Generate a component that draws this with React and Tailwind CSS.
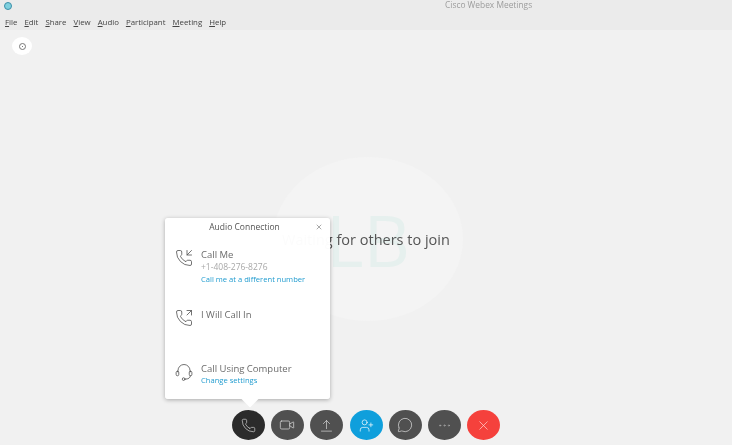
import React from 'react';
import { Phone, PhoneIncoming, PhoneOutgoing, Video, UserPlus, MessageCircle, Ellipsis, X } from 'lucide-react';

const menus = ['File', 'Edit', 'Share', 'View', 'Audio', 'Participant', 'Meeting', 'Help'];

const HeadsetIcon = ({ size, strokeWidth, className }) => (
  <svg width={size} height={size} viewBox="0 0 24 24" fill="none" stroke="currentColor" strokeWidth={strokeWidth} strokeLinecap="round" className={className}>
    <path d="M4 12 V10 a8 8 0 0 1 16 0 V12" />
    <rect x="1.5" y="11" width="3.5" height="6" rx="1.7" />
    <rect x="19" y="11" width="3.5" height="6" rx="1.7" />
    <path d="M20.5 17 c0 3 -2.5 4.5 -7 4.5" />
    <circle cx="11.5" cy="21.5" r="1.8" />
  </svg>
);

const UploadIcon = ({ size, strokeWidth, className }) => (
  <svg width={size} height={size} viewBox="0 0 24 24" fill="none" stroke="currentColor" strokeWidth={strokeWidth} strokeLinecap="round" strokeLinejoin="round" className={className}>
    <path d="M12 17 V4" />
    <path d="M7 9 L12 4 L17 9" />
    <path d="M4 21 H20" />
  </svg>
);

const AudioRow = ({ icon: Icon, title, className, children }) => (
  <div className={`flex items-start gap-[8px] pl-[10px] ${className}`}>
    <Icon size={18} strokeWidth={1.1} className="mt-[1px] text-[#555555] shrink-0" />
    <div className="flex flex-col">
      <span className="text-[9.5px] leading-[14px] text-[#6b6b6b]">{title}</span>
      {children}
    </div>
  </div>
);

const RoundButton = ({ icon: Icon, bg, color = 'text-[#d8d8d8]', size = 15 }) => (
  <button className={`w-[33px] h-[30px] rounded-[50%] flex items-center justify-center ${bg}`}>
    <Icon size={size} strokeWidth={1.1} className={color} />
  </button>
);

export default function App() {
  return (
    <div className="w-[732px] h-[447px] flex flex-col overflow-hidden bg-[#f1f1f1] blur-[0.4px]" style={{ fontFamily: '"Open Sans", "Noto Sans", sans-serif' }}>
      {/* Title + menu bar */}
      <header className="h-[30px] bg-[#ebebeb] flex flex-col shrink-0">
        <div className="h-[11px] flex items-center pl-[4px]">
          <div className="w-[8px] h-[8px] rounded-full bg-[#7fd0de] border border-[#3d8fa8]" />
          <span className="ml-[433px] text-[8.4px] text-[#9c9c9c]">Cisco Webex Meetings</span>
        </div>
        <nav className="mt-[5px] flex gap-[7px] pl-[5px] text-[7.85px] leading-[12px] text-[#444444]">
          {menus.map((m) => (
            <span key={m}><u>{m[0]}</u>{m.slice(1)}</span>
          ))}
        </nav>
      </header>

      {/* Meeting stage */}
      <main className="flex-1 flex flex-col relative">
        <div className="pt-[7px] pl-[12px]">
          <div className="w-[20px] h-[18px] rounded-[50%] bg-white flex items-center justify-center">
            <div className="w-[7px] h-[7px] rounded-full border border-[#777777] flex items-center justify-center">
              <div className="w-[1px] h-[1px] bg-[#777777]" />
            </div>
          </div>
        </div>

        <div className="flex-1 flex justify-center">
          <div className="ml-[4px] mt-[102px] w-[190px] h-[164px] rounded-[50%] bg-[#f4f4f4] flex items-center justify-center">
            <span className="text-[72px] leading-none text-[#e6f0ee]">LB</span>
          </div>
        </div>

        <p className="absolute left-[282px] top-[201px] text-[14.5px] leading-[18px] text-[#555555]">Waiting for others to join</p>

        {/* Toolbar */}
        <div className="h-[35px] flex justify-center items-start gap-[6.3px]">
          <RoundButton icon={Phone} bg="bg-[#2b2b2b]" />
          <RoundButton icon={Video} bg="bg-[#505050]" size={16} />
          <RoundButton icon={UploadIcon} bg="bg-[#505050]" />
          <RoundButton icon={UserPlus} bg="bg-[#0f9fdc]" color="text-white" />
          <RoundButton icon={MessageCircle} bg="bg-[#505050]" size={16} />
          <RoundButton icon={Ellipsis} bg="bg-[#505050]" color="text-[#a8a8a8]" />
          <RoundButton icon={X} bg="bg-[#f5413c]" color="text-[#ffd9d6]" />
        </div>
        <div className="h-[2px] bg-white" />

        {/* Audio connection popover */}
        <div className="absolute left-[165px] top-[188px] w-[165px] h-[181px] bg-white/98 rounded-[3px] shadow-[0_1px_4px_rgba(0,0,0,0.3)] flex flex-col">
          <div className="h-[18px] flex items-center justify-center pr-[6px] relative">
            <span className="text-[8.5px] text-[#555555]">Audio Connection</span>
            <X size={8} strokeWidth={1.5} className="absolute right-[7px] top-[5px] text-[#555555]" />
          </div>
          <AudioRow icon={PhoneIncoming} title="Call Me" className="mt-[12px]">
            <span className="text-[8.5px] leading-[12px] -mt-[1px] text-[#a8a8a8]">+1-408-276-8276</span>
            <span className="text-[7.6px] leading-[11px] mt-[1px] text-[#1f9bcf]">Call me at a different number</span>
          </AudioRow>
          <AudioRow icon={PhoneOutgoing} title="I Will Call In" className="mt-[23px]" />
          <AudioRow icon={HeadsetIcon} title="Call Using Computer" className="mt-[35px]">
            <span className="text-[7.6px] leading-[8px] text-[#1f9bcf]">Change settings</span>
          </AudioRow>
          <div className="absolute left-[79px] -bottom-[6px] w-[12px] h-[12px] bg-white rotate-45" />
        </div>
      </main>
    </div>
  );
}
